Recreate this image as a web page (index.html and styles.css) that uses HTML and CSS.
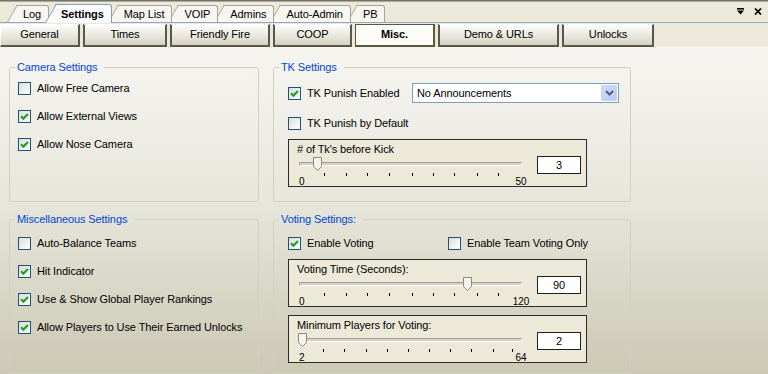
FILE: index.html
```html
<!DOCTYPE html>
<html lang="en">
<head>
    <meta charset="UTF-8">
    <meta name="viewport" content="width=device-width, initial-scale=1.0">
    <title>Server Settings</title>
    <link rel="stylesheet" href="styles.css">
</head>
<body>

<div class="window">

    <!-- Main tabs -->
    <div class="tabstrip">
        <div class="tabs">
            <div class="tab">Log</div>
            <div class="tab active">Settings</div>
            <div class="tab">Map List</div>
            <div class="tab">VOIP</div>
            <div class="tab">Admins</div>
            <div class="tab">Auto-Admin</div>
            <div class="tab">PB</div>
        </div>
        <div class="tools">
            <svg width="7" height="7" viewBox="0 0 7 7"><rect x="0" y="0" width="7" height="1.6" fill="#000"/><polygon points="0,2.6 7,2.6 3.5,6.6" fill="#000"/></svg>
            <svg width="8" height="7" viewBox="0 0 8 7"><path d="M1 0.5 L7 6.5 M7 0.5 L1 6.5" stroke="#000" stroke-width="1.7" fill="none"/></svg>
        </div>
    </div>

    <!-- Settings sub pages -->
    <div class="subtabs">
        <div class="btn btn-general">General</div>
        <div class="btn btn-times">Times</div>
        <div class="btn btn-ff">Friendly Fire</div>
        <div class="btn btn-coop">COOP</div>
        <div class="btn btn-misc selected">Misc.</div>
        <div class="btn btn-demo">Demo &amp; URLs</div>
        <div class="btn btn-unlocks">Unlocks</div>
    </div>

    <div class="panel">

        <fieldset class="group">
            <legend>Camera Settings</legend>
            <div class="check"><span class="cb"></span>Allow Free Camera</div>
            <div class="check"><span class="cb"><svg viewBox="0 0 11 11"><path d="M2 5.2 L4.4 7.6 L9 3" /></svg></span>Allow External Views</div>
            <div class="check"><span class="cb"><svg viewBox="0 0 11 11"><path d="M2 5.2 L4.4 7.6 L9 3" /></svg></span>Allow Nose Camera</div>
        </fieldset>

        <fieldset class="group">
            <legend>TK Settings</legend>
            <div class="group-body tk-body">
                <div class="line">
                    <div class="check check-tk"><span class="cb"><svg viewBox="0 0 11 11"><path d="M2 5.2 L4.4 7.6 L9 3" /></svg></span>TK Punish Enabled</div>
                    <div class="combo">
                        <span>No Announcements</span>
                        <span class="combo-btn"><svg width="9" height="6" viewBox="0 0 9 6"><path d="M1 1 L4.5 4.5 L8 1" /></svg></span>
                    </div>
                </div>
                <div class="line line-second">
                    <div class="check"><span class="cb"></span>TK Punish by Default</div>
                </div>
                <div class="slider-box">
                    <div class="slider-label"># of Tk's before Kick</div>
                    <div class="slider-row">
                        <div class="scale">
                            <div class="track"></div>
                            <span class="tick" style="left:27px"></span>
                            <span class="tick" style="left:49px"></span>
                            <span class="tick" style="left:70px"></span>
                            <span class="tick" style="left:92px"></span>
                            <span class="tick" style="left:115px"></span>
                            <span class="tick" style="left:136px"></span>
                            <span class="tick" style="left:157px"></span>
                            <span class="tick" style="left:180px"></span>
                            <span class="tick" style="left:201px"></span>
                            <svg class="thumb" style="left:16px" width="9" height="14" viewBox="0 0 9 14"><polygon points="0.5,0.5 8.5,0.5 8.5,9.5 4.5,13.5 0.5,9.5" /></svg>
                            <span class="scale-min">0</span>
                            <span class="scale-max">50</span>
                        </div>
                        <div class="num">3</div>
                    </div>
                </div>
            </div>
        </fieldset>

        <fieldset class="group">
            <legend>Miscellaneous Settings</legend>
            <div class="misc-body">
                <div class="check"><span class="cb"></span>Auto-Balance Teams</div>
                <div class="check"><span class="cb"><svg viewBox="0 0 11 11"><path d="M2 5.2 L4.4 7.6 L9 3" /></svg></span>Hit Indicator</div>
                <div class="check"><span class="cb"><svg viewBox="0 0 11 11"><path d="M2 5.2 L4.4 7.6 L9 3" /></svg></span>Use &amp; Show Global Player Rankings</div>
                <div class="check"><span class="cb"><svg viewBox="0 0 11 11"><path d="M2 5.2 L4.4 7.6 L9 3" /></svg></span>Allow Players to Use Their Earned Unlocks</div>
            </div>
        </fieldset>

        <fieldset class="group">
            <legend>Voting Settings:</legend>
            <div class="group-body voting-body">
                <div class="line">
                    <div class="check check-vote"><span class="cb"><svg viewBox="0 0 11 11"><path d="M2 5.2 L4.4 7.6 L9 3" /></svg></span>Enable Voting</div>
                    <div class="check"><span class="cb"></span>Enable Team Voting Only</div>
                </div>
                <div class="slider-box">
                    <div class="slider-label">Voting Time (Seconds):</div>
                    <div class="slider-row">
                        <div class="scale">
                            <div class="track"></div>
                            <span class="tick" style="left:27px"></span>
                            <span class="tick" style="left:49px"></span>
                            <span class="tick" style="left:70px"></span>
                            <span class="tick" style="left:92px"></span>
                            <span class="tick" style="left:115px"></span>
                            <span class="tick" style="left:136px"></span>
                            <span class="tick" style="left:157px"></span>
                            <span class="tick" style="left:180px"></span>
                            <span class="tick" style="left:201px"></span>
                            <svg class="thumb" style="left:166px" width="9" height="14" viewBox="0 0 9 14"><polygon points="0.5,0.5 8.5,0.5 8.5,9.5 4.5,13.5 0.5,9.5" /></svg>
                            <span class="scale-min">0</span>
                            <span class="scale-max">120</span>
                        </div>
                        <div class="num">90</div>
                    </div>
                </div>
                <div class="slider-box slider-last">
                    <div class="slider-label">Minimum Players for Voting:</div>
                    <div class="slider-row">
                        <div class="scale">
                            <div class="track"></div>
                            <span class="tick" style="left:26px"></span>
                            <span class="tick" style="left:47px"></span>
                            <span class="tick" style="left:69px"></span>
                            <span class="tick" style="left:90px"></span>
                            <span class="tick" style="left:111px"></span>
                            <span class="tick" style="left:132px"></span>
                            <span class="tick" style="left:153px"></span>
                            <span class="tick" style="left:174px"></span>
                            <span class="tick" style="left:196px"></span>
                            <span class="tick" style="left:215px"></span>
                            <svg class="thumb" style="left:1px" width="9" height="14" viewBox="0 0 9 14"><polygon points="0.5,0.5 8.5,0.5 8.5,9.5 4.5,13.5 0.5,9.5" /></svg>
                            <span class="scale-min">2</span>
                            <span class="scale-max">64</span>
                        </div>
                        <div class="num">2</div>
                    </div>
                </div>
            </div>
        </fieldset>

    </div>
</div>

</body>
</html>
```

FILE: styles.css
```css
body {
    margin: 0;
    font-family: "Liberation Sans", Arial, sans-serif;
    font-size: 11px;
    letter-spacing: -0.1px;
    color: #000;
    background-color: #ece9d8;
}
.window {
    width: 768px;
    height: 374px;
    overflow: hidden;
}

/* Top tab strip */
.tabstrip {
    position: relative;
    z-index: 0;
    display: flex;
    align-items: flex-end;
    height: 23px;
    box-sizing: border-box;
    padding-left: 17px;
    background-color: #ece9d8;
    border-top: 1px solid #74736b;
    box-shadow: inset 0 1px #a9a89f;
    border-bottom: 1px solid #8fa8cc;
}
.tabs {
    display: flex;
    align-items: flex-end;
}
.tab {
    position: relative;
    height: 17px;
    line-height: 16px;
    box-sizing: border-box;
    padding: 0 7px 0 6px;
    margin-left: 6px;
    background-color: #f7f6f1;
    border-top: 1px solid #a5a49c;
    border-right: 1px solid #a5a49c;
    border-top-right-radius: 3px;
}
.tab:first-child {
    margin-left: 0;
}
.tab::before {
    content: "";
    position: absolute;
    top: -1px;
    bottom: 0;
    left: -10px;
    width: 14px;
    background-color: #f7f6f1;
    border-left: 1px solid #a5a49c;
    border-top: 1px solid #a5a49c;
    transform: skewX(-30deg);
    transform-origin: bottom left;
    z-index: -1;
}
.tab.active {
    z-index: 1;
    height: 19px;
    margin-bottom: -1px;
    line-height: 18px;
    font-weight: bold;
    background-color: #fcfcfe;
    border-color: #7f9db9;
}
.tab.active::before {
    background-color: #fcfcfe;
    border-color: #7f9db9;
}
.tools {
    margin-left: auto;
    align-self: center;
    display: flex;
    align-items: center;
    gap: 10px;
    padding-right: 6px;
}
.tools svg {
    display: block;
}

/* Sub page buttons */
.subtabs {
    display: flex;
    gap: 3px;
    padding-top: 1px;
    height: 24px;
    box-sizing: border-box;
    background-color: #ece9d8;
}
.btn {
    width: 80px;
    height: 23px;
    box-sizing: border-box;
    line-height: 19px;
    text-align: center;
    background: linear-gradient(#fdfdfb, #ecebe4 45%, #d6d2c2);
    border-top: 1px solid #fff;
    border-left: 2px solid #5a574b;
    border-right: 2px solid #5a574b;
    border-bottom: 2px solid #5a574b;
}
.btn-general { border-left-color: #fff; border-left-width: 1px; }
.btn-times { width: 84px; }
.btn-ff { width: 100px; }
.btn-coop { width: 79px; }
.btn-demo { width: 121px; }
.btn-unlocks { width: 92px; }
.btn.selected {
    background: #fcfcf9;
    font-weight: bold;
    border: 1px solid #5d583a;
    border-right-width: 2px;
    border-bottom-width: 2px;
}

/* Settings page */
.panel {
    display: grid;
    grid-template-columns: 250px 358px;
    grid-template-rows: 141px 161px;
    column-gap: 14px;
    row-gap: 11px;
    height: 327px;
    box-sizing: border-box;
    padding: 14px 0 0 9px;
    background: linear-gradient(#f6f5f1, #e8e7dd 45%, #cbc9b3);
}
.group {
    margin: 0;
    padding: 0 8px;
    min-width: 0;
    border: 1px solid #d0d0bf;
    border-radius: 3px;
}
.group legend {
    margin-left: -3px;
    padding: 0 7px 0 2px;
    line-height: 13px;
    color: #0046d5;
}
.group-body {
    padding-left: 6px;
}
.misc-body {
    padding-top: 3px;
}
.check {
    display: flex;
    align-items: center;
    gap: 6px;
    height: 28px;
    white-space: nowrap;
}
.cb {
    display: flex;
    align-items: center;
    justify-content: center;
    width: 13px;
    height: 13px;
    box-sizing: border-box;
    border: 1px solid #1c5180;
    background: linear-gradient(135deg, #dcdcd5, #f6f6f3 70%, #fff);
}
.cb svg {
    width: 11px;
    height: 11px;
    fill: none;
    stroke: #21a121;
    stroke-width: 2.2;
}

/* Rows with several controls */
.line {
    display: flex;
    align-items: center;
    height: 20px;
}
.line .check {
    height: 20px;
}
.tk-body .line {
    margin-top: 9px;
}
.tk-body .line-second {
    margin-top: 10px;
}
.voting-body .line {
    margin-top: 7px;
}
.check-tk {
    width: 124px;
}
.check-vote {
    width: 160px;
}
.combo {
    display: flex;
    align-items: center;
    width: 207px;
    height: 20px;
    box-sizing: border-box;
    padding-left: 4px;
    border: 1px solid #7f9db9;
    background-color: #fff;
}
.combo-btn {
    display: flex;
    align-items: center;
    justify-content: center;
    margin-left: auto;
    margin-right: 1px;
    width: 16px;
    height: 16px;
    box-sizing: border-box;
    border: 1px solid #c3d2f6;
    border-radius: 1px;
    background: linear-gradient(135deg, #d2ddfb, #b6c8f4);
}
.combo-btn svg {
    fill: none;
    stroke: #4d6185;
    stroke-width: 2;
}

/* Track bars */
.slider-box {
    width: 299px;
    height: 48px;
    box-sizing: border-box;
    margin-top: 6px;
    padding: 3px 5px 0 8px;
    border: 1px solid #2b2b28;
    background-color: #ece9d8;
}
.slider-last {
    margin-top: 8px;
}
.slider-label {
    line-height: 13px;
}
.slider-row {
    display: flex;
    justify-content: space-between;
}
.scale {
    position: relative;
    width: 232px;
    height: 30px;
    margin-top: 1px;
}
.track {
    position: absolute;
    left: 2px;
    top: 5px;
    width: 223px;
    height: 4px;
    box-sizing: border-box;
    border-top: 1px solid #a3a194;
    border-left: 1px solid #a3a194;
    border-bottom: 1px solid #fff;
    border-right: 1px solid #fff;
    background-color: #d4d1c3;
}
.tick {
    position: absolute;
    top: 16px;
    width: 1px;
    height: 3px;
    background-color: #000;
}
.thumb {
    position: absolute;
    top: 0;
    fill: #f4f3ee;
    stroke: #8b8978;
    stroke-width: 1;
}
.scale-min, .scale-max {
    position: absolute;
    top: 19px;
    font-size: 10px;
    line-height: 11px;
}
.scale-min {
    left: 2px;
}
.scale-max {
    left: 224px;
    transform: translateX(-50%);
}
.num {
    width: 44px;
    height: 18px;
    box-sizing: border-box;
    line-height: 16px;
    text-align: center;
    border: 1px solid #1e1e1e;
    background-color: #fff;
}
```
